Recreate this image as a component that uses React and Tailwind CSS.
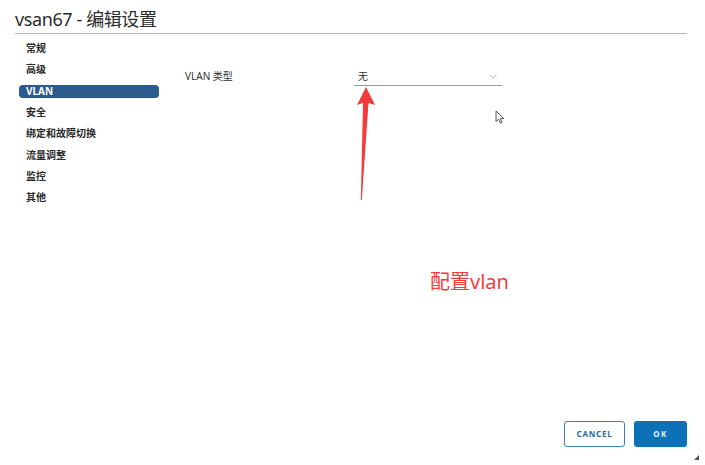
import React from 'react';

const NAV_ITEMS = ['常规', '高级', 'VLAN', '安全', '绑定和故障切换', '流量调整', '监控', '其他'];

const FONT = '"Noto Sans", "Noto Sans CJK SC", sans-serif';

const RedArrow = () => (
  <svg className="absolute left-0 top-0 pointer-events-none" width="705" height="465">
    <polygon
      points="366,87 375,105 368.5,103 361.8,200 360.8,200 363,103 357,105"
      fill="#f43b3b"
    />
  </svg>
);

const Cursor = () => (
  <svg className="absolute left-[495px] top-[110px]" width="12" height="16" viewBox="0 0 12 16">
    <path d="M1 1 L1 11.5 L3.6 9.2 L5.4 13.2 L7 12.5 L5.3 8.6 L8.8 8.6 Z" fill="#fff" stroke="#444" strokeWidth="0.9" strokeLinejoin="round" />
  </svg>
);

const App = () => {
  return (
    <div className="relative flex h-[465px] w-[705px] flex-col overflow-hidden bg-white" style={{ fontFamily: FONT }}>
      <div className="ml-[15px] mr-[18px] border-b border-[#b8b8b8] pb-[1px] pt-[7px]">
        <h1 className="text-[18px] leading-[25px] tracking-[-0.4px] text-[#2b2b2b]">vsan67 - 编辑设置</h1>
      </div>

      <div className="flex pt-[4px]">
        <nav className="ml-[19px] w-[140px]">
          {NAV_ITEMS.map((item) => (
            <div key={item} className="flex h-[21.3px] items-center">
              {item === 'VLAN' ? (
                <span className="flex h-[13px] w-full items-center rounded-[4px] bg-[#2c5a8c] px-[7px] text-[10px] font-bold text-white">
                  {item}
                </span>
              ) : (
                <span className="px-[7px] text-[10px] font-semibold text-[#2a2a2a]">{item}</span>
              )}
            </div>
          ))}
        </nav>

        <div className="pl-[26px] pt-[29px]">
          <div className="flex h-[19px] items-center">
            <span className="w-[169px] text-[10px] text-[#333]">VLAN 类型</span>
            <div className="flex h-[19px] w-[148px] items-center justify-between border-b border-[#9a9a9a] pl-[4px] pr-[5px]">
              <span className="text-[10px] text-[#333]">无</span>
              <svg width="8" height="5" viewBox="0 0 8 5">
                <path d="M0.5 0.8 L4 4 L7.5 0.8" fill="none" stroke="#a8a8a8" strokeWidth="0.9" />
              </svg>
            </div>
          </div>
        </div>
      </div>

      <div className="flex-1" />

      <div className="flex justify-end gap-[9px] pb-[18px] pr-[18px]">
        <button
          type="button"
          className="h-[26px] w-[61px] rounded-[3px] border border-[#3b80ba] text-[8px] font-bold tracking-[0.8px] text-[#1d6aa8]"
        >
          CANCEL
        </button>
        <button
          type="button"
          className="h-[26px] w-[53px] rounded-[3px] bg-[#0b72b8] text-[8px] font-bold tracking-[1.5px] text-[#e6f0f8]"
        >
          OK
        </button>
      </div>

      <RedArrow />
      <Cursor />

      <span className="absolute left-[430px] top-[270px] text-[20px] leading-[24px] text-[#f53c3c]">配置vlan</span>

      <svg className="absolute left-[694px] top-[455px]" width="6" height="6" viewBox="0 0 6 6">
        <polygon points="5,0 5,5 0,5" fill="#555" />
      </svg>
    </div>
  );
};

export default App;
